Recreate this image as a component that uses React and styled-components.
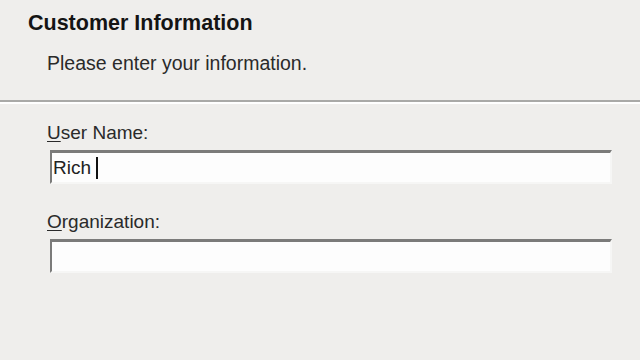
import React from "react";
import styled, { createGlobalStyle } from "styled-components";

const GlobalStyle = createGlobalStyle`
  html, body {
    margin: 0;
    padding: 0;
    background: #efeeec;
  }
  body {
    font-family: "Liberation Sans", Arial, sans-serif;
    color: #1a1a1a;
  }
`;

const Dialog = styled.div`
  width: 640px;
  height: 360px;
  overflow: hidden;
  background: #efeeec;
  display: flex;
  flex-direction: column;
`;

const Header = styled.header`
  height: 102px;
  box-sizing: border-box;
  padding: 11px 0 0 28px;
  border-bottom: 2px solid #a9a9a7;
  box-shadow: 0 2px 0 #ffffff;
`;

const Title = styled.h1`
  margin: 0;
  font-size: 21.5px;
  font-weight: bold;
  line-height: 24px;
  color: #141414;
`;

const Subtitle = styled.p`
  margin: 16px 0 0 19px;
  font-size: 19.5px;
  line-height: 24px;
  color: #2a2a2a;
`;

const Body = styled.main`
  padding: 19px 28px 0 47px;
  display: flex;
  flex-direction: column;
`;

const Field = styled.div`
  display: flex;
  flex-direction: column;
  margin-bottom: ${(p) => p.gap || 0}px;
`;

const Label = styled.label`
  font-size: 19px;
  line-height: 24px;
  color: #2a2a2a;
  margin-bottom: 5px;

  u {
    text-decoration: underline;
    text-underline-offset: 2px;
  }
`;

const TextBox = styled.div`
  margin-left: 3px;
  width: 562px;
  height: 34px;
  box-sizing: border-box;
  background: #fdfdfd;
  border-top: 3px solid #7b7b7a;
  border-left: 2px solid #7b7b7a;
  border-right: 2px solid #f6f6f5;
  border-bottom: 2px solid #f6f6f5;
  display: flex;
  align-items: center;
  padding-left: 1px;
  font-size: 19px;
  color: #222;
`;

const Caret = styled.span`
  display: inline-block;
  width: 2px;
  height: 22px;
  margin-left: 5px;
  background: #111;
`;

export default function App() {
  return (
    <>
      <GlobalStyle />
      <Dialog>
        <Header>
          <Title>Customer Information</Title>
          <Subtitle>Please enter your information.</Subtitle>
        </Header>
        <Body>
          <Field gap={26}>
            <Label>
              <u>U</u>ser Name:
            </Label>
            <TextBox>
              Rich
              <Caret />
            </TextBox>
          </Field>
          <Field>
            <Label>
              <u>O</u>rganization:
            </Label>
            <TextBox />
          </Field>
        </Body>
      </Dialog>
    </>
  );
}
